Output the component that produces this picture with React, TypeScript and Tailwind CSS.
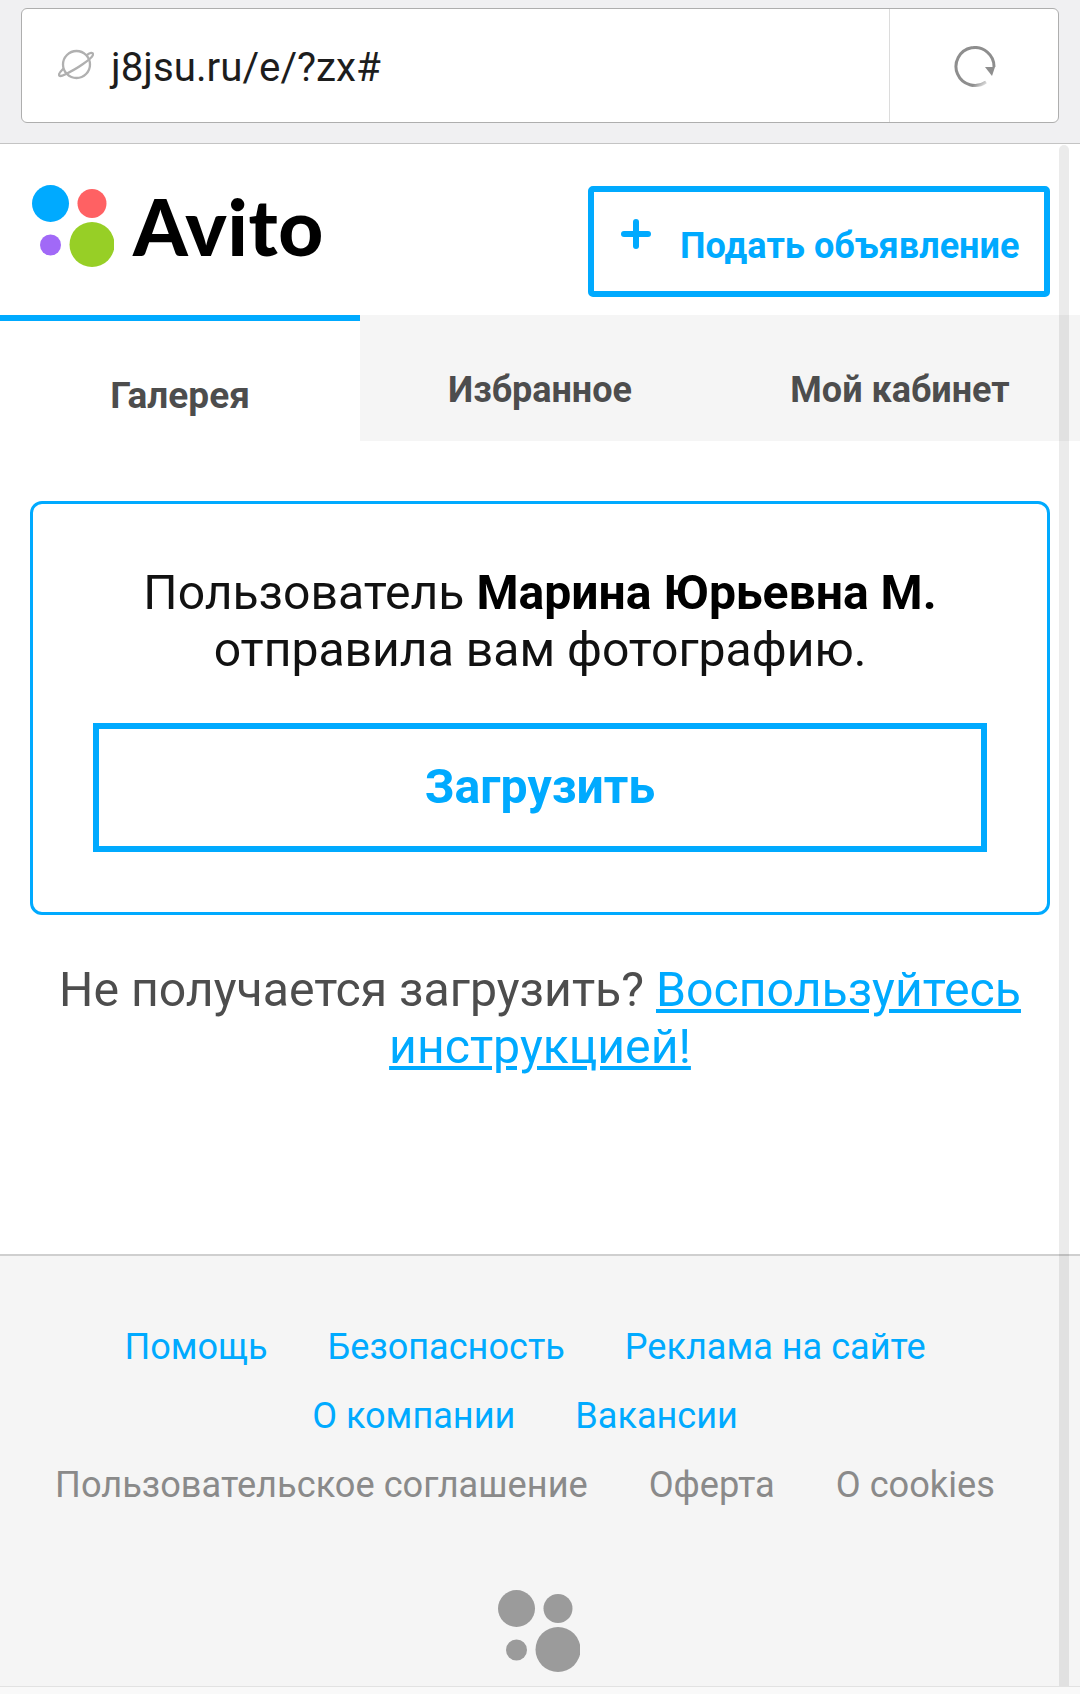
import React from "react";

function Planet() {
  return (
    <svg width="36" height="32" viewBox="0 0 36 32" fill="none" stroke="#b0b0b0" strokeWidth="2.3" strokeLinecap="round">
      <circle cx="18.5" cy="15.5" r="13.5" />
      <path d="M29 6 C32 3.5 35 3 35 5.5 C35 8 31 11 25 15 C18 20 12 23 7 25.5 C3 27.5 1 27.5 1 25.5 C1 24 3 22 5 20" />
    </svg>
  );
}

function Reload() {
  return (
    <svg width="42" height="42" viewBox="0 0 42 42" fill="none">
      <defs>
        <linearGradient id="fade" x1="0.5" y1="0.5" x2="0.9" y2="0.95">
          <stop offset="0.55" stopColor="#8e8e8e" />
          <stop offset="1" stopColor="#8e8e8e" stopOpacity="0.05" />
        </linearGradient>
      </defs>
      <path d="M32 36 A19 19 0 1 1 40 21" stroke="url(#fade)" strokeWidth="3" />
      <path d="M31 21 L41 21 L38 30 Z" fill="#8e8e8e" />
    </svg>
  );
}

function Dots({ gray }: { gray?: boolean }) {
  return (
    <svg width="82" height="82" viewBox="0 0 82 82" className="block shrink-0">
      <circle cx="18.5" cy="18.5" r="18.5" fill={gray ? "#9b9b9b" : "#00aaff"} />
      <circle cx="60" cy="18.5" r="14.5" fill={gray ? "#9b9b9b" : "#ff6163"} />
      <circle cx="18.5" cy="60" r="10.5" fill={gray ? "#9b9b9b" : "#a169f7"} />
      <circle cx="60" cy="59.5" r="22.5" fill={gray ? "#9b9b9b" : "#97cf26"} />
    </svg>
  );
}

export default function App() {
  return (
    <div className="relative w-[1080px] h-[1694px] bg-white flex flex-col overflow-hidden font-['Roboto',sans-serif]">
      <div className="h-[144px] bg-[#f0f0f2] border-b border-[#c4c4c4] pt-[8px] px-[21px] shrink-0">
        <div className="h-[115px] bg-white border border-[#aeaeae] rounded-[6px] flex">
          <div className="flex-1 flex items-center pl-[36px] gap-[17px] pb-[2px]">
            <Planet />
            <span className="mt-[7px] text-[40.3px] leading-none text-[#1d1d1d]">j8jsu.ru/e/?zx#</span>
          </div>
          <div className="w-[169px] border-l border-[#dcdcdc] flex items-center justify-center pt-[2px] pl-[2px]">
            <Reload />
          </div>
        </div>
      </div>

      <div className="h-[171px] shrink-0 flex items-start justify-between pl-[32px] pr-[30px] pt-[41px]">
        <div className="flex items-start">
          <Dots />
          <span className="ml-[19px] text-[78px] leading-[82px] font-black tracking-[0.7px] text-black font-['Lato',sans-serif]">Avito</span>
        </div>
        <div className="mt-[1px] w-[462px] h-[111px] border-[6px] border-[#00aaff] rounded-[5px] flex items-center pl-[27px]">
          <span className="relative mb-[16px] w-[30px] h-[30px] shrink-0">
            <span className="absolute left-0 top-[12px] w-[30px] h-[6px] rounded-full bg-[#00aaff]" />
            <span className="absolute left-[12px] top-0 w-[6px] h-[30px] rounded-full bg-[#00aaff]" />
          </span>
          <span className="ml-[29px] mt-[10px] text-[36.1px] leading-none font-bold text-[#00aaff] whitespace-nowrap">Подать объявление</span>
        </div>
      </div>

      <div className="h-[126px] shrink-0 grid grid-cols-3 text-[36px] font-bold text-[#4d4d4d] text-center bg-[#f5f5f5]">
        <div className="bg-white border-t-[6px] border-[#00aaff] flex items-center justify-center pt-[2px] text-[37px]"><span className="mt-[27px]">Галерея</span></div>
        <div className="flex items-center justify-center pb-[16px]"><span className="mt-[39px]">Избранное</span></div>
        <div className="flex items-center justify-center pb-[16px]"><span className="mt-[39px]">Мой кабинет</span></div>
      </div>

      <div className="flex-1 px-[30px] pt-[60px]">
        <div className="h-[414px] border-[3px] border-[#00aaff] rounded-[12px] flex flex-col items-center pt-[60px]">
          <p className="text-[48.1px] leading-[57px] text-[#111] text-center whitespace-nowrap">
            Пользователь <b className="font-bold text-black">Марина Юрьевна М.</b>
            <br />
            отправила вам фотографию.
          </p>
          <div className="mt-[45px] w-[894px] h-[129px] border-[6px] border-[#00aaff] flex items-center justify-center text-[48.2px] font-bold text-[#00aaff]">
            Загрузить
          </div>
        </div>
        <p className="mt-[46px] text-[48.2px] leading-[57px] text-[#4d4d4d] text-center">
          Не получается загрузить? <a className="text-[#00aaff] underline">Воспользуйтесь инструкцией!</a>
        </p>
      </div>

      <div className="h-[432px] shrink-0 bg-[#f5f5f5] border-t-2 border-[#cfcfcf] flex flex-col items-center pt-[57px] text-[36.1px] text-[#00aaff]">
        <div className="mr-[30px] flex gap-[60px] h-[69px] items-center"><span>Помощь</span><span>Безопасность</span><span>Реклама на сайте</span></div>
        <div className="mr-[30px] flex gap-[60px] h-[69px] items-center"><span>О компании</span><span>Вакансии</span></div>
        <div className="mr-[30px] flex gap-[61px] h-[69px] items-center text-[36.2px] text-[#8a8a8a]"><span>Пользовательское соглашение</span><span>Оферта</span><span>О cookies</span></div>
        <div className="mt-[70px] mr-[2px]"><Dots gray /></div>
      </div>
      <div className="h-[8px] shrink-0 bg-[#f9f9f9] border-t border-[#e2e2e2]" />

      <div className="absolute left-[1059px] top-[145px] w-[10px] h-[1541px] rounded-t-[5px] bg-black/[0.08]" />
    </div>
  );
}
